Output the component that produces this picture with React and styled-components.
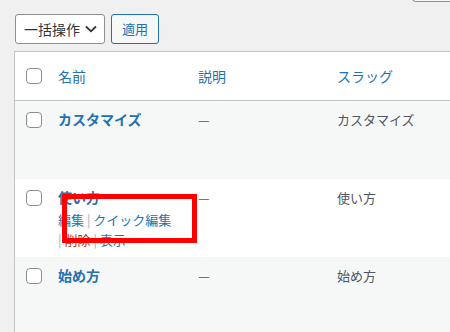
import React from "react";
import styled, { createGlobalStyle } from "styled-components";

const GlobalStyle = createGlobalStyle`
  html, body {
    margin: 0;
    background: #f0f0f1;
    overflow: hidden;
  }
  body {
    font-family: "Noto Sans CJK JP", "Noto Sans", sans-serif;
    color: #3c434a;
  }
`;

const Page = styled.div`
  padding-left: 14px;
`;

const TopBar = styled.div`
  display: flex;
  justify-content: flex-end;
  height: 2px;
`;

const SearchStub = styled.div`
  width: 38px;
  height: 30px;
  margin-top: -28px;
  box-sizing: border-box;
  border: 1px solid #8c8f94;
  border-right: none;
  border-radius: 4px 0 0 4px;
  background: #f6f7f7;
`;

const Toolbar = styled.div`
  display: flex;
  gap: 6px;
  margin: 12px 0 7px 1px;
  height: 30px;
`;

const SelectBox = styled.div`
  box-sizing: border-box;
  width: 90px;
  height: 30px;
  display: flex;
  align-items: center;
  justify-content: space-between;
  padding: 0 7px 0 8px;
  border: 1px solid #8c8f94;
  border-radius: 3px;
  background: #fff;
  color: #2c3338;
  font-size: 14px;
`;

const ApplyButton = styled.button`
  box-sizing: border-box;
  height: 30px;
  padding: 0 10px;
  border: 1px solid #2271b1;
  border-radius: 3px;
  background: #f6f7f7;
  color: #2271b1;
  font-family: inherit;
  font-size: 13px;
  line-height: 28px;
  cursor: pointer;
`;

const Table = styled.div`
  box-sizing: border-box;
  width: 100%;
  border-top: 1px solid #c3c4c7;
  border-left: 1px solid #c3c4c7;
  background: #fff;
`;

const columns = "33px 140px 139px 1fr";

const HeaderRow = styled.div`
  display: grid;
  grid-template-columns: ${columns};
  align-items: center;
  height: 49px;
  box-sizing: border-box;
  border-bottom: 1px solid #c3c4c7;
`;

const HeaderCell = styled.div`
  padding: 0 10px;
  font-size: 14px;
  color: #2271b1;
  line-height: 21px;
`;

const Row = styled.div`
  display: grid;
  grid-template-columns: ${columns};
  align-items: start;
  background: ${(p) => (p.$striped ? "#f6f7f7" : "#fff")};
`;

const CheckCell = styled.div`
  padding-left: 11px;
  padding-top: ${(p) => (p.$header ? "0" : "11px")};
  display: flex;
`;

const Checkbox = styled.span`
  display: block;
  width: 16px;
  height: 16px;
  box-sizing: border-box;
  border: 1px solid #8c8f94;
  border-radius: 4px;
  background: #fff;
`;

const Cell = styled.div`
  padding: 8px 10px;
  font-size: 13px;
  line-height: 21px;
  color: #50575e;
`;

const NameCell = styled(Cell)`
  position: relative;
`;

const Title = styled.a`
  display: block;
  font-size: 14px;
  font-weight: 600;
  line-height: 21px;
  color: #2271b1;
  text-decoration: none;
`;

const RowActions = styled.div`
  padding-top: 2px;
  font-size: 13px;
  line-height: 19.5px;
  color: #a7aaad;
  visibility: ${(p) => (p.$visible ? "visible" : "hidden")};
`;

const NoWrap = styled.span`
  white-space: nowrap;
`;

const ActionLink = styled.a`
  color: ${(p) => (p.$danger ? "#b32d2e" : "#2271b1")};
  text-decoration: none;
`;

const Highlight = styled.div`
  position: absolute;
  left: 14px;
  top: 15px;
  width: 135px;
  height: 49px;
  box-sizing: border-box;
  border: 5px solid #ff0000;
  pointer-events: none;
`;

const Chevron = () => (
  <svg width="12" height="8" viewBox="0 0 12 8" aria-hidden="true">
    <polyline
      points="1,1.5 6,6.3 11,1.5"
      fill="none"
      stroke="#2c3338"
      strokeWidth="1.8"
    />
  </svg>
);

const rows = [
  { name: "カスタマイズ", slug: "カスタマイズ", striped: true },
  { name: "使い方", slug: "使い方", striped: false, active: true },
  { name: "始め方", slug: "始め方", striped: true },
];

export default function App() {
  return (
    <>
      <GlobalStyle />
      <Page>
        <TopBar>
          <SearchStub />
        </TopBar>
        <Toolbar>
          <SelectBox>
            <span>一括操作</span>
            <Chevron />
          </SelectBox>
          <ApplyButton>適用</ApplyButton>
        </Toolbar>
        <Table>
          <HeaderRow>
            <CheckCell $header>
              <Checkbox />
            </CheckCell>
            <HeaderCell>名前</HeaderCell>
            <HeaderCell>説明</HeaderCell>
            <HeaderCell>スラッグ</HeaderCell>
          </HeaderRow>
          {rows.map((r) => (
            <Row key={r.name} $striped={r.striped}>
              <CheckCell>
                <Checkbox />
              </CheckCell>
              <NameCell>
                <Title>{r.name}</Title>
                <RowActions $visible={r.active}>
                  <ActionLink>編集</ActionLink> | <ActionLink>クイック編集</ActionLink>{" "}
                  <NoWrap>
                    | <ActionLink $danger>削除</ActionLink>
                  </NoWrap>{" "}
                  <NoWrap>
                    | <ActionLink>表示</ActionLink>
                  </NoWrap>
                </RowActions>
                {r.active && <Highlight />}
              </NameCell>
              <Cell>—</Cell>
              <Cell>{r.slug}</Cell>
            </Row>
          ))}
        </Table>
      </Page>
    </>
  );
}
